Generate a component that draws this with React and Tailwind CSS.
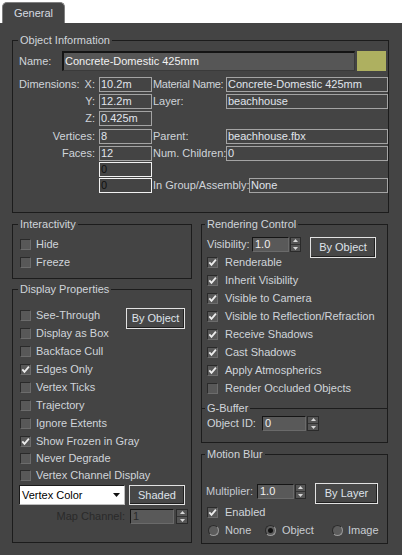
import React from 'react';

// 3ds Max "Object Properties" - General tab

const Group = ({ title, className = '', titleLeft = 'left-[5px]', children }) => (
  <div className={`relative border border-[#1c1c1c] ${className}`}>
    <span className={`absolute -top-[7px] ${titleLeft} bg-[#444444] px-[2px] leading-[13px] text-[#d0d4da]`}>{title}</span>
    {children}
  </div>
);

const Check = ({ on }) => (
  <span className="flex h-[11px] w-[11px] shrink-0 items-center justify-center border border-[#2a2a2a] border-b-[#6c6c6c] border-r-[#6c6c6c] bg-[#585858]">
    {on && (
      <svg width="9" height="9" viewBox="0 0 9 9">
        <path d="M1.3 4.3 L3.5 6.9 L7.9 1.7" fill="none" stroke="#ececec" strokeWidth="1.8" />
      </svg>
    )}
  </span>
);

const Radio = ({ on }) => (
  <span className="flex h-[11px] w-[11px] shrink-0 items-center justify-center rounded-full border border-[#2b2b2b] border-b-[#9a9a9a] border-r-[#9a9a9a] bg-[#5c5c5c]">
    {on && <span className="h-[5px] w-[5px] rounded-full bg-[#111111]" />}
  </span>
);

const Btn = ({ className = '', children }) => (
  <div className={`flex shrink-0 items-center justify-center border border-[#e2e2e2] bg-[#474747] text-[#dfe3ea] shadow-[inset_-1px_-1px_0_#202020] ${className}`}>
    {children}
  </div>
);

const Arrows = ({ className = '' }) => (
  <div className={`flex h-[15px] shrink-0 flex-col items-center justify-center gap-[1px] border border-[#2a2a2a] bg-[#555555] ${className}`}>
    <svg width="5" height="3" viewBox="0 0 5 3"><path d="M0 3 L2.5 0 L5 3Z" fill="#d8d8d8" /></svg>
    <div className="my-[1px] h-px w-full bg-[#333333]" />
    <svg width="5" height="3" viewBox="0 0 5 3"><path d="M0 0 L2.5 3 L5 0Z" fill="#d8d8d8" /></svg>
  </div>
);

const SpinInput = ({ className = '', dim, children }) => (
  <div className={`flex h-[15px] shrink-0 items-center border border-[#151515] border-b-[#6a6a6a] border-r-[#6a6a6a] bg-[#595959] pl-[2px] ${dim ? 'text-[#2a2a2a]' : 'text-[#f0f0f0]'} ${className}`}>
    {children}
  </div>
);

const Field = ({ className = '', zero, children }) => (
  <div className={`flex h-[15px] shrink-0 items-center overflow-hidden whitespace-nowrap border pl-[1px] ${zero ? 'border-[#f2f2f2] text-[#111111]' : 'border-[#a4a4a4] text-[#e0e4ec]'} ${className}`}>
    {children}
  </div>
);

const InfoRow = ({ className = '', left, value, zero, rightLabel, rightValue, rightLabelW = 'w-[73px]', rightFieldW = 'w-[162px]' }) => (
  <div className={`flex h-[15px] items-center ${className}`}>
    <div className="w-[82px] shrink-0 text-right text-[#d0d4da]">{left}</div>
    <Field className="ml-[4px] w-[53px]" zero={zero}>{value}</Field>
    {rightLabel && (
      <>
        <span className={`ml-[1px] shrink-0 whitespace-nowrap text-[#d0d4da] ${rightLabelW}`}>{rightLabel}</span>
        {rightValue !== undefined && <Field className={rightFieldW}>{rightValue}</Field>}
      </>
    )}
  </div>
);

const CheckRow = ({ on, label, className = 'h-[18px]', gap = 'ml-[5px]', pl = 'pl-[7px]' }) => (
  <div className={`flex items-center ${pl} ${className}`}>
    <Check on={on} />
    <span className={`${gap} whitespace-nowrap text-[#d0d4da]`}>{label}</span>
  </div>
);

export default function App() {
  return (
    <div className="h-[555px] w-[402px] overflow-hidden bg-white font-['Liberation_Sans',Arial,sans-serif] text-[11px] leading-[13px]">
      <div className="flex h-[23px] items-end">
        <div className="ml-[2px] flex h-[21px] w-[63px] items-center justify-center rounded-t-[5px] border border-b-0 border-[#808080] bg-[#444444] text-[#d6dae0]">
          General
        </div>
      </div>

      <div className="h-[532px] bg-[#444444] pt-[17px]">
        <Group title="Object Information" className="ml-[12px] h-[173px] w-[377px]">
          <div className="mt-[10px] flex h-[20px] items-center pl-[6px]">
            <span className="w-[43px] shrink-0 text-[#d0d4da]">Name:</span>
            <div className="flex h-[20px] w-[293px] shrink-0 items-center border-t-2 border-l-2 border-b border-r border-[#141414] border-b-[#3a3a3a] border-r-[#3a3a3a] bg-[#565656] pl-[1px] text-[#f2f2f2]">
              Concrete-Domestic 425mm
            </div>
            <div className="ml-[2px] h-[20px] w-[29px] shrink-0 bg-[#aeb060]" />
          </div>

          <div className="mt-[6px] flex h-[15px] items-center">
            <div className="flex w-[82px] shrink-0 justify-between pl-[6px] text-[#d0d4da]">
              <span>Dimensions:</span>
              <span>X:</span>
            </div>
            <Field className="ml-[4px] w-[53px]">10.2m</Field>
            <span className="ml-[1px] w-[73px] shrink-0 whitespace-nowrap tracking-[-0.3px] text-[#d0d4da]">Material Name:</span>
            <Field className="w-[162px]">Concrete-Domestic 425mm</Field>
          </div>
          <InfoRow className="mt-[2px]" left="Y:" value="12.2m" rightLabel="Layer:" rightValue="beachhouse" />
          <InfoRow className="mt-[2px]" left="Z:" value="0.425m" />
          <InfoRow className="mt-[3px]" left="Vertices:" value="8" rightLabel="Parent:" rightValue="beachhouse.fbx" />
          <InfoRow className="mt-[2px]" left="Faces:" value="12" rightLabel="Num. Children:" rightValue="0" />
          <InfoRow className="mt-[1px]" left="" value="0" zero />
          <InfoRow className="mt-[1px]" left="" value="0" zero rightLabel="In Group/Assembly:" rightValue="None" rightLabelW="w-[96px]" rightFieldW="w-[139px]" />
        </Group>

        <div className="mt-[11px] flex">
          <div className="ml-[12px] w-[180px] shrink-0">
            <Group title="Interactivity" className="h-[55px]">
              <div className="pt-[10px]">
                <CheckRow label="Hide" />
                <CheckRow label="Freeze" />
              </div>
            </Group>

            <Group title="Display Properties" className="mt-[10px] h-[254px]">
              <div className="pt-[16px]">
                <div className="flex h-[18px] items-center pl-[7px] pr-[6px]">
                  <Check />
                  <span className="ml-[5px] text-[#d0d4da]">See-Through</span>
                  <Btn className="ml-auto mt-[2px] h-[21px] w-[59px] self-start">By Object</Btn>
                </div>
                <CheckRow label="Display as Box" />
                <CheckRow label="Backface Cull" />
                <CheckRow on label="Edges Only" />
                <CheckRow label="Vertex Ticks" />
                <CheckRow label="Trajectory" />
                <CheckRow label="Ignore Extents" />
                <CheckRow on label="Show Frozen in Gray" />
                <CheckRow label="Never Degrade" className="h-[16px]" />
                <CheckRow label="Vertex Channel Display" />

                <div className="mt-[1px] flex items-center pl-[6px]">
                  <div className="flex h-[20px] w-[106px] shrink-0 items-center justify-between border border-[#1a1a1a] border-b-[#bdbdbd] border-r-[#bdbdbd] bg-white pl-[2px] pr-[4px] text-black">
                    <span>Vertex Color</span>
                    <svg width="7" height="4" viewBox="0 0 7 4"><path d="M0 0 L3.5 4 L7 0Z" fill="#111" /></svg>
                  </div>
                  <Btn className="ml-[4px] h-[20px] w-[56px]">Shaded</Btn>
                </div>

                <div className="mt-[4px] flex items-center">
                  <span className="w-[112px] shrink-0 text-right text-[#2a2a2a]">Map Channel:</span>
                  <SpinInput className="ml-[5px] w-[44px]" dim>1</SpinInput>
                  <Arrows className="ml-[2px] w-[12px]" />
                </div>
              </div>
            </Group>
          </div>

          <div className="ml-[9px] w-[187px] shrink-0">
            <Group title="Rendering Control" titleLeft="left-[3px]" className="h-[219px]">
              <div className="pt-[12px]">
                <div className="flex h-[16px] items-start pl-[5px]">
                  <span className="flex h-[15px] w-[45px] shrink-0 items-center text-[#d0d4da]">Visibility:</span>
                  <SpinInput className="w-[37px]">1.0</SpinInput>
                  <Arrows className="ml-[1px] w-[11px]" />
                  <Btn className="ml-[9px] h-[21px] w-[66px]">By Object</Btn>
                </div>
                <CheckRow on pl="pl-[5px]" gap="ml-[7px]" label="Renderable" />
                <CheckRow on pl="pl-[5px]" gap="ml-[7px]" label="Inherit Visibility" />
                <CheckRow on pl="pl-[5px]" gap="ml-[7px]" label="Visible to Camera" />
                <CheckRow on pl="pl-[5px]" gap="ml-[7px]" label="Visible to Reflection/Refraction" />
                <CheckRow on pl="pl-[5px]" gap="ml-[7px]" label="Receive Shadows" />
                <CheckRow on pl="pl-[5px]" gap="ml-[7px]" label="Cast Shadows" />
                <CheckRow on pl="pl-[5px]" gap="ml-[7px]" label="Apply Atmospherics" />
                <CheckRow pl="pl-[5px]" gap="ml-[7px]" label="Render Occluded Objects" />

                <div className="relative mt-[11px] border-t border-[#1c1c1c]">
                  <span className="absolute -top-[7px] left-[3px] bg-[#444444] px-[2px] leading-[13px] text-[#d0d4da]">G-Buffer</span>
                </div>
                <div className="mt-[7px] flex items-center pl-[5px]">
                  <span className="w-[55px] shrink-0 text-[#d0d4da]">Object ID:</span>
                  <SpinInput className="w-[44px]">0</SpinInput>
                  <Arrows className="ml-[1px] w-[12px]" />
                </div>
              </div>
            </Group>

            <Group title="Motion Blur" titleLeft="left-[3px]" className="mt-[11px] h-[90px]">
              <div className="pt-[28px]">
                <div className="flex h-[21px] items-start pl-[4px]">
                  <span className="mt-[1px] flex h-[15px] w-[51px] shrink-0 items-center text-[#c4c8d0]">Multiplier:</span>
                  <SpinInput className="mt-[1px] w-[37px] text-[#c8c8c8]">1.0</SpinInput>
                  <Arrows className="ml-[1px] mt-[1px] w-[11px]" />
                  <Btn className="ml-[9px] h-[21px] w-[63px]">By Layer</Btn>
                </div>
                <CheckRow on className="h-[16px]" pl="pl-[5px]" gap="ml-[7px]" label="Enabled" />
                <div className="flex h-[20px] items-center pl-[6px] text-[#c8ccd2]">
                  <div className="flex w-[57px] shrink-0 items-center">
                    <Radio />
                    <span className="ml-[6px]">None</span>
                  </div>
                  <div className="flex w-[67px] shrink-0 items-center">
                    <Radio on />
                    <span className="ml-[6px]">Object</span>
                  </div>
                  <div className="flex items-center">
                    <Radio />
                    <span className="ml-[5px]">Image</span>
                  </div>
                </div>
              </div>
            </Group>
          </div>
        </div>
      </div>
    </div>
  );
}
